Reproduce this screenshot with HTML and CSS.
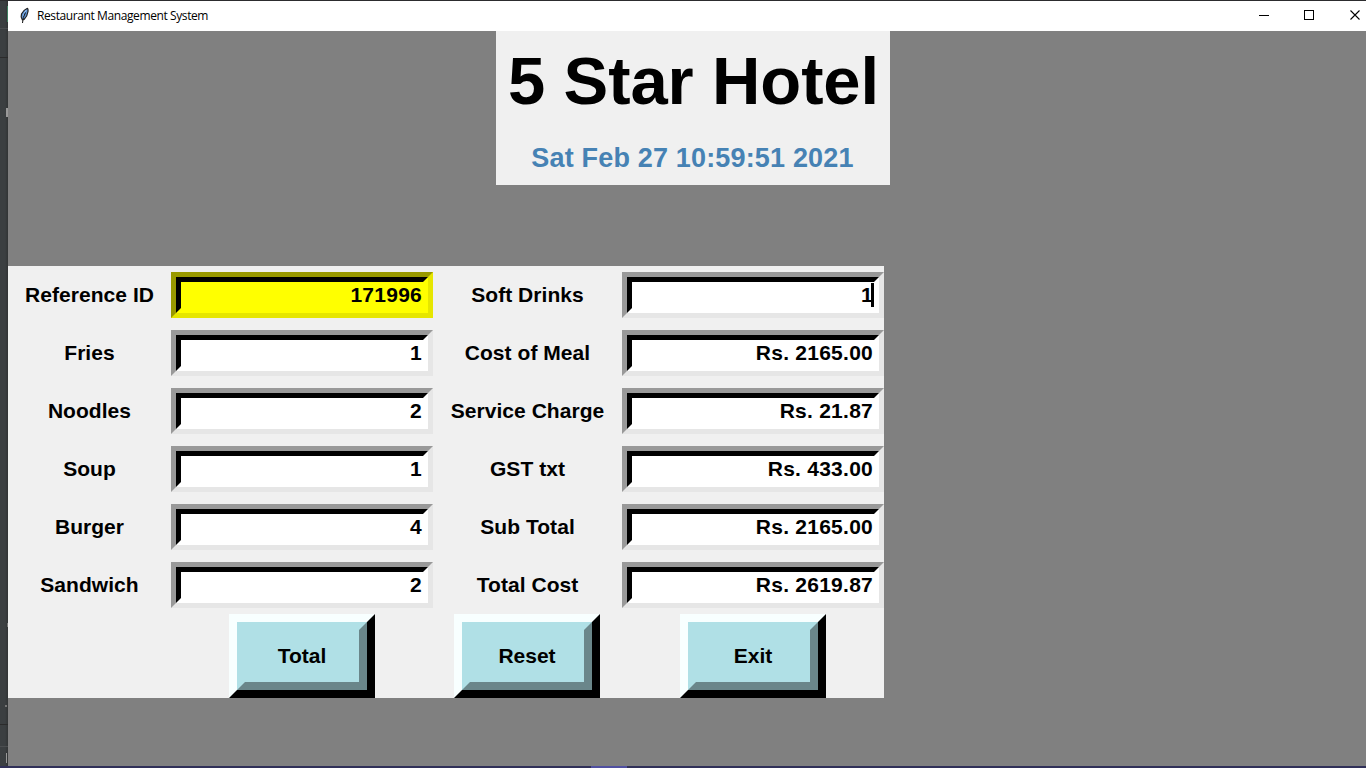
FILE: index.html
```html
<!DOCTYPE html>
<html lang="en">
<head>
<meta charset="utf-8">
<title>Restaurant Management System</title>
<link rel="stylesheet" href="styles.css">
</head>
<body>
<div class="desktop">
  <div class="backdrop">
    <i class="mark green"></i><i class="rule r1"></i><i class="rule r2"></i><i class="mark m1"></i><i class="mark m2"></i><i class="mark m3"></i><i class="rule r3"></i><i class="rule r4"></i><i class="mark m4"></i>
  </div>
  <main class="window">
    <header class="titlebar">
      <svg class="feather" width="12" height="18" viewBox="0 0 12 18"><path d="M8 1.500Q9.300 1.200 9 4.500Q8.500 9 5 12.500L3.300 12.800Q1.500 10 2.500 7Q4.500 3 8 1.500Z" fill="#5c93d6" stroke="#222" stroke-width="1.200"/><path d="M7.300 3Q4.800 6 4 10.500" fill="none" stroke="#9cc4f0" stroke-width="1"/><path d="M6.500 5.500L4.300 10.500L3.500 16" fill="none" stroke="#111" stroke-width="1"/></svg>
      <span class="caption">Restaurant Management System</span>
      <svg class="controls" width="107" height="30" viewBox="0 0 107 30" shape-rendering="crispEdges" fill="none" stroke="#000"><path d="M0 14.5H10"/><rect x="45.500" y="9.500" width="9" height="9"/><path d="M91.500 9.500L100.500 18.500M100.500 9.500L91.500 18.500" shape-rendering="auto" stroke-width="1.100"/></svg>
    </header>
    <section class="banner">
      <h1>5 Star Hotel</h1>
      <p>Sat Feb 27 10:59:51 2021</p>
    </section>
    <section class="form">
      <div class="label">Reference ID</div><div class="entry yellow"><div>171996</div></div>
      <div class="label">Soft Drinks</div><div class="entry"><div>1<i class="caret"></i></div></div>
      <div class="label">Fries</div><div class="entry"><div>1</div></div>
      <div class="label">Cost of Meal</div><div class="entry"><div>Rs. 2165.00</div></div>
      <div class="label">Noodles</div><div class="entry"><div>2</div></div>
      <div class="label">Service Charge</div><div class="entry"><div>Rs. 21.87</div></div>
      <div class="label">Soup</div><div class="entry"><div>1</div></div>
      <div class="label">GST txt</div><div class="entry"><div>Rs. 433.00</div></div>
      <div class="label">Burger</div><div class="entry"><div>4</div></div>
      <div class="label">Sub Total</div><div class="entry"><div>Rs. 2165.00</div></div>
      <div class="label">Sandwich</div><div class="entry"><div>2</div></div>
      <div class="label">Total Cost</div><div class="entry"><div>Rs. 2619.87</div></div>
      <button class="button total"><span>Total</span></button>
      <button class="button reset"><span>Reset</span></button>
      <button class="button exit"><span>Exit</span></button>
    </section>
  </main>
  <footer class="taskbar"><i></i></footer>
</div>
</body>
</html>
```
FILE: styles.css
```css
* { box-sizing: border-box; }
body { margin: 0; overflow: hidden; }
.desktop {
  width: 1366px;
  height: 768px;
  padding-top: 1px;
  display: grid;
  grid-template-columns: 8px 1fr;
  grid-template-rows: 765px 2px;
  background: #2c2c2e;
  font-family: "Liberation Sans", Arial, sans-serif;
}
.backdrop { position: relative; background: linear-gradient(90deg, #3b3f41 0 5px, #313435 8px); }
.mark, .rule { position: absolute; }
.rule { left: 0; width: 8px; height: 1px; background: #4b4e50; }
.r1 { top: 27px; }
.r2 { top: 56px; background: #2b2b2b; }
.r3 { top: 723px; background: #2b2b2b; }
.r4 { top: 745px; }
.mark { left: 6px; width: 2px; background: #999; }
.green { top: 5px; left: 7px; width: 1px; height: 16px; background: #3f7f5f; }
.m1 { top: 107px; height: 9px; }
.m2 { top: 622px; left: 7px; width: 1px; height: 4px; background: #777; }
.m3 { top: 704px; left: 5px; height: 2px; background: #777; }
.m4 { top: 752px; left: 6px; height: 10px; width: 1px; }
.window { background: #808080; display: flex; flex-direction: column; }
.titlebar { height: 30px; flex: none; display: flex; align-items: center; background: #fff; padding-left: 11px; }
.feather { margin-right: 6px; }
.caption { font: 12px/30px "Open Sans", "Noto Sans", sans-serif; letter-spacing: -0.4px; color: #000; white-space: nowrap; }
.controls { margin-left: auto; }
.banner { margin-left: 488px; width: 394px; height: 154px; flex: none; background: #f0f0f0; text-align: center; white-space: nowrap; }
.banner h1 { margin: 0; padding-left: 1px; font-size: 67px; font-weight: bold; line-height: 100px; letter-spacing: -0.1px; }
.banner p { margin: 0; font-size: 27px; font-weight: bold; line-height: 54px; letter-spacing: 0.17px; color: #4682b4; padding-right: 1px; }
.form {
  margin-top: 81px;
  width: 876px;
  height: 432px;
  display: grid;
  grid-template-columns: 163px 262px 189px 262px;
  grid-template-rows: repeat(6, 58px) 84px;
  background: #f0f0f0;
  font-size: 21px;
  font-weight: bold;
  line-height: 24px;
  white-space: nowrap;
}
.label { place-self: center; letter-spacing: 0.05px; }
.entry { align-self: center; height: 46px; border: 5px solid; border-color: #999 #e6e6e6 #e6e6e6 #999; background: #fff; }
.entry div { height: 36px; border: 5px solid; border-color: #000 #fff #fff #000; padding-right: 1px; text-align: right; line-height: 26px; letter-spacing: 0.25px; position: relative; }
.entry .caret { position: absolute; right: 0; top: 1px; width: 3px; height: 24px; background: #000; }
.yellow { background: #ff0; border-color: #990 #e6e600 #e6e600 #990; }
.entry.yellow div { border-color: #000 #ff0 #ff0 #000; }
.button {
  grid-row: 7;
  justify-self: center;
  width: 146px;
  height: 84px;
  padding: 0;
  border: 8px solid;
  border-color: #f8ffff #000 #000 #f8ffff;
  background: #b0e0e6;
  font: inherit;
  color: #000;
}
.button span { display: block; height: 68px; border: 8px solid; border-color: #b0e0e6 #6a868a #6a868a #b0e0e6; line-height: 52px; }
.total { grid-column: 2; }
.reset { grid-column: 3; margin-right: 1px; }
.exit { grid-column: 4; }
.taskbar { grid-column: 1 / -1; background: #303058; padding-left: 591px; }
.taskbar i { display: block; width: 36px; height: 2px; background: #5050a0; }
```
